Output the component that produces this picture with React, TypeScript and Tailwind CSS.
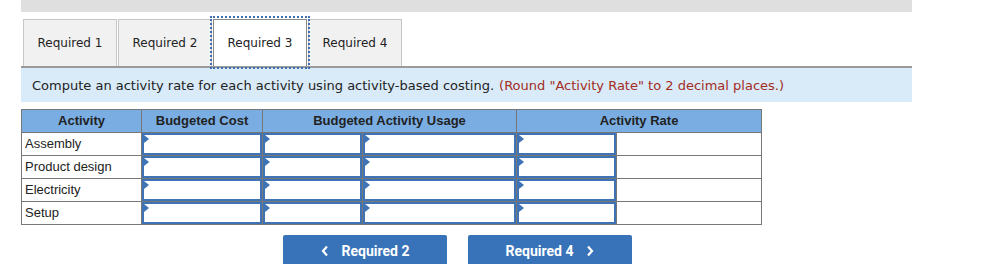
import React from 'react';

const rows = ['Assembly', 'Product design', 'Electricity', 'Setup'];
const tabs = ['Required 1', 'Required 2', 'Required 3', 'Required 4'];

function InputCell() {
  return (
    <td className="border border-[#777] p-0">
      <div className="relative h-[22px] border-2 border-[#3e74b5] bg-white">
        <span className="absolute left-0 top-0 w-0 h-0 border-y-[4px] border-y-transparent border-l-[5px] border-l-[#3e74b5]" />
      </div>
    </td>
  );
}

export default function App() {
  return (
    <div className="w-[987px] h-[264px] overflow-hidden bg-white font-['DejaVu_Sans',Verdana,sans-serif]">
      <div className="ml-[21px] w-[891px] h-[12px] bg-[#dfdfdf]" />

      {/* Tabs */}
      <div className="ml-[23px] mt-[7px] flex gap-[1px]">
        {tabs.map((t) => {
          const active = t === 'Required 3';
          return (
            <div
              key={t}
              className={
                active
                  ? 'w-[94px] h-[47px] flex items-center justify-center text-[12px] text-[#222] bg-white border border-[#8a8a8a] border-b-0 outline-2 outline-dotted outline-[#3f6fae] outline-offset-[1px] relative z-10'
                  : 'w-[94px] h-[47px] flex items-center justify-center text-[12px] text-[#222] bg-[#f1f1f1] border border-[#c6c6c6] border-b-0'
              }
            >
              {t}
            </div>
          );
        })}
      </div>

      {/* Instruction */}
      <div className="ml-[21px] w-[891px] h-[36px] border-t-2 border-[#9a9a9a] bg-[#d9ebf9] flex items-center pl-[11px] pt-[2px] text-[13px] text-[#222]">
        <span>Compute an activity rate for each activity using activity-based costing.</span>
        <span className="ml-[5px] text-[#a32c22]">(Round "Activity Rate" to 2 decimal places.)</span>
      </div>

      {/* Table */}
      <table className="ml-[21px] mt-[7px] w-[740px] table-fixed border-collapse border border-[#777] font-['Liberation_Sans',Arial,sans-serif] text-[13px] leading-[22px] text-[#222]">
        <colgroup>
          <col className="w-[120px]" />
          <col className="w-[121px]" />
          <col className="w-[100px]" />
          <col className="w-[154px]" />
          <col className="w-[100px]" />
          <col className="w-[145px]" />
        </colgroup>
        <thead>
          <tr className="bg-[#7aaee3]">
            <th className="border border-[#777] h-[22px] p-0 font-bold">Activity</th>
            <th className="border border-[#777] p-0 font-bold">Budgeted Cost</th>
            <th colSpan={2} className="border border-[#777] p-0 font-bold">Budgeted Activity Usage</th>
            <th colSpan={2} className="border border-[#777] p-0 font-bold">Activity Rate</th>
          </tr>
        </thead>
        <tbody>
          {rows.map((r) => (
            <tr key={r}>
              <td className="border border-[#777] p-0 pl-[3px] text-left">{r}</td>
              <InputCell />
              <InputCell />
              <InputCell />
              <InputCell />
              <td className="border border-[#777] p-0" />
            </tr>
          ))}
        </tbody>
      </table>

      {/* Nav buttons */}
      <div className="ml-[283px] mt-[10px] flex gap-[21px] font-['Roboto',Arial,sans-serif] text-[14px] font-bold text-white">
        <button className="w-[164px] h-[32px] bg-[#3873b9] rounded-t-[2px] flex items-center justify-center gap-[13px]">
          <svg width="8" height="12" viewBox="0 0 8 12" fill="none" stroke="white" strokeWidth="2.2">
            <path d="M6 1.5 L2 6 L6 10.5" />
          </svg>
          <span>Required 2</span>
        </button>
        <button className="w-[164px] h-[32px] bg-[#3873b9] rounded-t-[2px] flex items-center justify-center gap-[13px]">
          <span>Required 4</span>
          <svg width="8" height="12" viewBox="0 0 8 12" fill="none" stroke="white" strokeWidth="2.2">
            <path d="M2 1.5 L6 6 L2 10.5" />
          </svg>
        </button>
      </div>
    </div>
  );
}
